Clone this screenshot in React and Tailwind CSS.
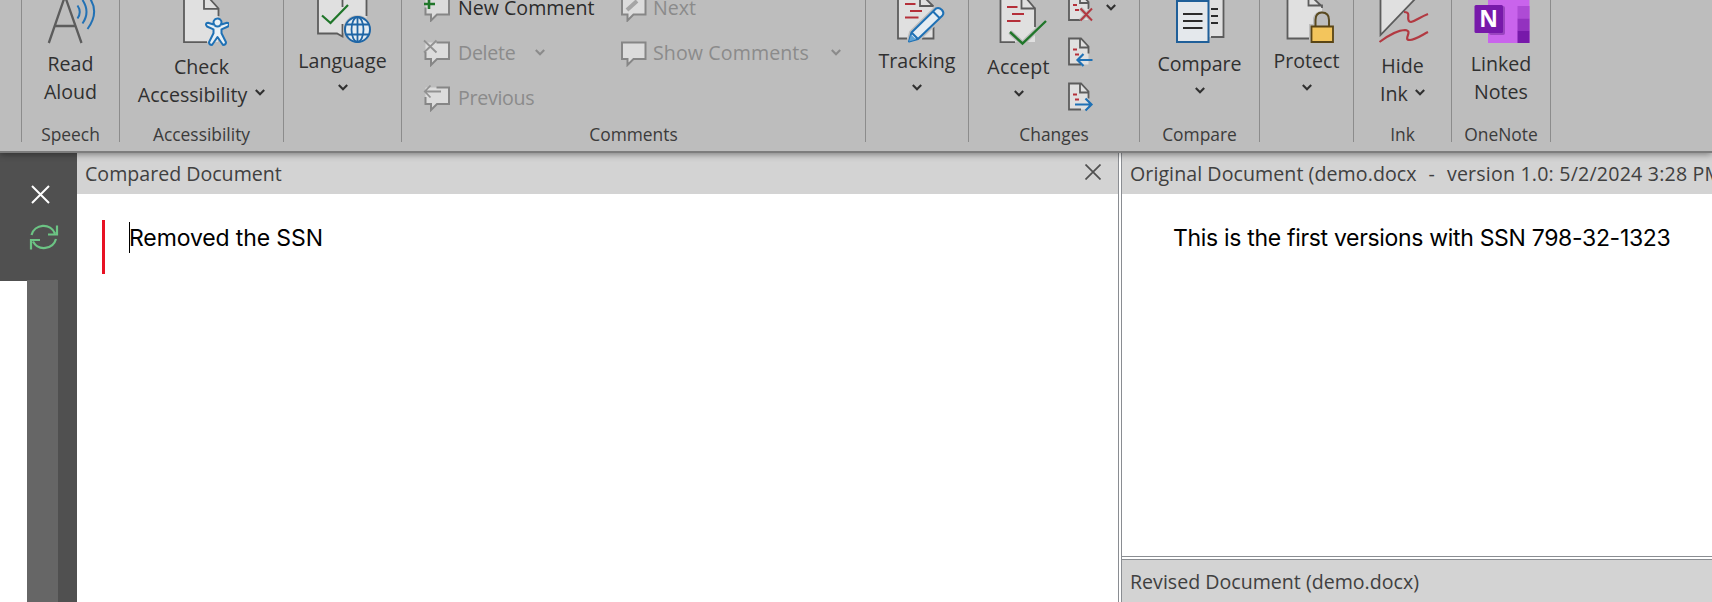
import React from 'react';

const Chevron = ({ className = '' }) => (
  <svg className={`shrink-0 ${className}`} width="10" height="7" viewBox="0 0 10 7" fill="none" stroke="currentColor" strokeWidth="2.1">
    <path d="M0.8 1 L5 5.2 L9.2 1" />
  </svg>
);

// Ribbon icons are drawn in ribbon coordinates, x is the left edge of the icon
const Icon = ({ x, y = 0, w, h, className = '', children }) => (
  <svg className={`shrink-0 ${className}`} width={w} height={h} viewBox={`${x} ${y} ${w} ${h}`} fill="none" stroke="#5c5c5c" strokeWidth="1.8">
    {children}
  </svg>
);

const Group = ({ className, label, children }) => (
  <div className={`flex shrink-0 ${className}`}>
    <div className="w-px h-[142px] bg-[#8c8c8c] shrink-0" />
    <div className="flex-1 min-w-0 h-[146px] flex flex-col">
      <div className="flex-1 min-h-0">{children}</div>
      <div className="h-6 leading-6 text-[17.4px] text-[#3b3b3b] text-center whitespace-nowrap">{label}</div>
    </div>
  </div>
);

const Bubble = ({ x, y, full }) => (
  <>
    <path d={`M${x} ${y} h23.5 v16.5 h-12 l-6 6 v-6 h-5.5 z`} fill="#dcdcdc" stroke="none" />
    <path
      d={full
        ? `M${x} ${y} h23.5 v16.5 h-12 l-6 6 v-6 h-5.5 z`
        : `M${x + 11} ${y} h12.5 v16.5 h-12 l-6 6 v-6 h-5.5 v-7`}
      stroke="#868686"
      strokeWidth="2"
    />
  </>
);

const SmallPage = ({ y }) => (
  <>
    <path d={`M1069 ${y} h12 l7.5 8 v18 h-19.5 z`} fill="#e0e0e0" stroke="none" />
    <path d={`M1081 ${y + 26} h-12 v-26 h12 l7.5 8 v7 M1080 ${y} v9 h8.5`} />
    <path d={`M1073 ${y + 11} h4 M1075 ${y + 16} h4`} stroke="#b5303a" />
  </>
);

const Ribbon = () => (
  <div className="relative z-10 h-[153px] w-full flex bg-[#bdbdbd] border-b-2 border-[#7d7d7d] shadow-[0_1px_7px_rgba(0,0,0,0.45)] overflow-hidden text-[19.6px] leading-7 text-[#303030]">
    <div className="w-[21px] shrink-0" />

    <Group className="w-[98px]" label="Speech">
      <div className="flex flex-col items-center text-center">
        <Icon x={45} w={51} h={49.5}>
          <path d="M48.8 43 L64 -1 H66 L81.5 43 M55 26 H75" strokeWidth="2.3" />
          <path d="M77.5 5.5 Q82 12 77.5 18.5 M82.5 0 Q90.5 12 82.5 23.5 M89 -3 Q100 12 87.5 29" stroke="#2271b4" strokeWidth="2" />
        </Icon>
        <span>Read<br />Aloud</span>
      </div>
    </Group>

    <Group className="w-[164px]" label="Accessibility">
      <div className="flex flex-col items-center">
        <Icon x={174} w={55} h={52.5}>
          <path d="M184 -2 H211 L218 8 V42 H184 z" fill="#e0e0e0" stroke="none" />
          <path d="M184 -2 V42.2 H207 M204 -2 V8.8 H218.5 V16 M210 -1 L218.5 8.5" />
          <path d="M217.5 18.5 a3.8 3.8 0 0 1 3 6.3 l6.5 -2 q2 0 2 2 l-1 1.7 l-6.5 2.8 v4 l4.5 9 q0 2.7 -3 2.7 l-5.5 -8 l-5.5 8 q-3 0 -3 -2.7 l4.5 -9 v-4 l-6.5 -2.8 l-1 -1.7 q0 -2 2 -2 l6.5 2 a3.8 3.8 0 0 1 3 -6.3 z" fill="#e8f0f5" stroke="#1f71b5" strokeWidth="2" strokeLinejoin="round" />
          <path d="M214.5 25.5 q3 2 6 0" stroke="#1f71b5" />
        </Icon>
        <span>Check</span>
        <span className="flex items-center gap-2 whitespace-nowrap">Accessibility<Chevron className="-mt-1" /></span>
      </div>
    </Group>

    <Group className="w-[118px]" label="">
      <div className="flex flex-col items-center">
        <Icon x={312} w={61} h={46.5}>
          <path d="M318 -2 H366.5 V33 H342 V36 L337 33.5 H318 z" fill="#e0e0e0" stroke="none" />
          <path d="M318 -2 V33.5 H337 L342.5 36.5 V24 M342.5 -2 V7 M366.5 -2 V16" />
          <path d="M322 15.5 L330.5 23 L348 5" stroke="#20762a" strokeWidth="2.2" />
          <circle cx="357.5" cy="29.5" r="14.3" fill="#bdbdbd" stroke="none" />
          <circle cx="357.5" cy="29.5" r="12.5" fill="#e4ecf2" stroke="#1f66a6" strokeWidth="2" />
          <path d="M357.5 17 V42 M346.5 24.5 H368.5 M346.5 34.5 H368.5" stroke="#1f66a6" />
          <ellipse cx="357.5" cy="29.5" rx="6" ry="12.5" stroke="#1f66a6" />
        </Icon>
        <span>Language</span>
        <Chevron className="mt-[9px]" />
      </div>
    </Group>

    <Group className="w-[464px]" label="Comments">
      <div className="flex -mt-[15px] pl-[21px] text-[#8b8b8b] whitespace-nowrap">
        <div className="w-[197px]">
          <div className="h-[45px] flex items-center gap-2 text-[#2b2b2b]">
            <Icon x={423} y={-9} w={27} h={28}>
              <Bubble x={425.5} y={-5} />
              <path d="M429 -5 V6 M424 1 H435" stroke="#20762a" strokeWidth="2.6" />
            </Icon>
            New Comment
          </div>
          <div className="h-[45px] flex items-center gap-2">
            <Icon x={423} y={37} w={27} h={28}>
              <Bubble x={425.5} y={40.5} />
              <path d="M424 38.5 L436.5 50.5 M436.5 38.5 L424 50.5" stroke="#929292" />
            </Icon>
            <span className="tracking-[-0.3px]">Delete</span>
            <Chevron className="ml-3" />
          </div>
          <div className="h-[45px] flex items-center gap-2">
            <Icon x={423} y={82} w={27} h={28}>
              <Bubble x={425.5} y={85.5} />
              <path d="M441 89.5 H425 M430.5 83.5 L424.8 89.5 L430.5 95.5" stroke="#929292" />
            </Icon>
            <span className="tracking-[-0.3px]">Previous</span>
          </div>
        </div>
        <div>
          <div className="h-[45px] flex items-center gap-[6px]">
            <Icon x={620} y={-9} w={27} h={28}>
              <Bubble x={622} y={-5} full />
              <path d="M627 7 L637 -2" stroke="#a5a5a5" strokeWidth="4" />
            </Icon>
            Next
          </div>
          <div className="h-[45px] flex items-center gap-[6px]">
            <Icon x={620} y={37} w={27} h={28}>
              <Bubble x={622} y={40.5} full />
            </Icon>
            <span className="tracking-[0.1px]">Show Comments</span>
            <Chevron className="ml-4" />
          </div>
        </div>
      </div>
    </Group>

    <Group className="w-[103px]" label="">
      <div className="flex flex-col items-center">
        <Icon x={887} w={60} h={46.5}>
          <path d="M898 -2 H926 L933.5 6 V38.5 H898 z" fill="#e0e0e0" stroke="none" />
          <path d="M907 38.5 H898 V-2 M920 -2 V6 H933.5 M925 -2 L933.5 6.5 M933.5 27 V38.5 H922" />
          <path d="M905 4 H915.5 M910 11 H922 M905 17.5 H918.5" stroke="#b5303a" />
          <path d="M909 41.5 L911.5 32.5 L936 8.5 q3 -1.5 6 1.5 q2.5 3 0.5 5.5 L918 39 z" stroke="#bdbdbd" strokeWidth="5" />
          <path d="M909 41.5 L911.5 32.5 L936 8.5 q3 -1.5 6 1.5 q2.5 3 0.5 5.5 L918 39 z M911.5 32.5 L918 39 M933 11.5 L939.5 18" fill="#e4ecf2" stroke="#1f71b5" strokeWidth="2" strokeLinejoin="round" />
          <path d="M909 41.5 L911 34.5 L916 39.5 z" fill="#5fa3d5" stroke="none" />
        </Icon>
        <span>Tracking</span>
        <Chevron className="mt-[9px]" />
      </div>
    </Group>

    <Group className="w-[171px]" label="Changes">
      <div className="flex">
        <div className="w-[99px] flex flex-col items-center">
          <Icon x={990} w={57} h={52.5}>
            <path d="M1000 -2 H1026 L1035 8 V42 H1000 z" fill="#e0e0e0" stroke="none" />
            <path d="M1015 42.2 H1000.5 V-2 M1021.5 -2 V8.5 H1035 V27 M1026 -2 L1035 8.5" />
            <path d="M1007 7 H1017.5 M1012 14 H1024 M1007 21 H1020.5" stroke="#b5303a" />
            <path d="M1010 32 L1022.5 43.5 L1046 21" stroke="#bdbdbd" strokeWidth="5" />
            <path d="M1010 32 L1022.5 43.5 L1046 21" stroke="#20762a" strokeWidth="2.4" />
          </Icon>
          <span className="tracking-[0.2px]">Accept</span>
          <Chevron className="mt-[9px]" />
        </div>
        <Icon x={1068} w={26} h={115}>
          <SmallPage y={-6} />
          <SmallPage y={38.5} />
          <SmallPage y={83.5} />
          <path d="M1080.5 8.5 L1092 20.5 M1092 8.5 L1080.5 20.5" stroke="#bdbdbd" strokeWidth="4" />
          <path d="M1080.5 8.5 L1092 20.5 M1092 8.5 L1080.5 20.5" stroke="#b23a42" strokeWidth="2" />
          <path d="M1092.5 60 H1078 M1083.5 54 L1077.5 60 L1083.5 66" stroke="#1f71b5" strokeWidth="2.2" />
          <path d="M1075 104.5 H1091 M1085.5 98.5 L1091.5 104.5 L1085.5 110.5" stroke="#1f71b5" strokeWidth="2.2" />
        </Icon>
        <Chevron className="mt-1 ml-3" />
      </div>
    </Group>

    <Group className="w-[120px]" label="Compare">
      <div className="flex flex-col items-center">
        <Icon x={1173} w={53} h={49.5}>
          <path d="M1208 -2 H1223.5 V37 H1208 z" fill="#e0e0e0" stroke="none" />
          <path d="M1223.5 -2 V37 H1211" />
          <path d="M1211 9 H1218 M1211 16 H1218 M1211 23 H1218" stroke="#2b2b2b" />
          <path d="M1177 1 H1208.5 V42 H1177 z" fill="#e4e8ec" stroke="#1f5f99" strokeWidth="2" />
          <path d="M1183 14 H1202.5 M1183 21 H1202.5 M1183 28 H1202.5" stroke="#2b2b2b" />
        </Icon>
        <span>Compare</span>
        <Chevron className="mt-[9px]" />
      </div>
    </Group>

    <Group className="w-[94px]" label="">
      <div className="flex flex-col items-center">
        <Icon x={1276} w={61} h={46.5}>
          <path d="M1287.5 -2 H1314 L1322 6 V38.5 H1287.5 z" fill="#e0e0e0" stroke="none" />
          <path d="M1309 38.5 H1287.5 V-2 M1308.5 -2 V5.5 H1322 V8 M1313 -2 L1322 6.5" />
          <path d="M1309 24 H1313 V18 Q1315 11 1322 11 Q1330 11 1331 18 V24 H1335 V44 H1309 z" fill="#bdbdbd" stroke="none" />
          <path d="M1315.5 26 V20 q0 -7.5 6.5 -7.5 q7 0 7 7.5 V26" stroke="#5a4a20" strokeWidth="2" />
          <path d="M1311.5 26.5 H1333 V42 H1311.5 z" fill="#f3c55c" stroke="#5a4515" strokeWidth="1.8" />
        </Icon>
        <span>Protect</span>
        <Chevron className="mt-[9px]" />
      </div>
    </Group>

    <Group className="w-[98px]" label="Ink">
      <div className="flex flex-col items-center">
        <Icon x={1376} w={53} h={52}>
          <path d="M1380.5 -3 V35 L1417 -3 z" fill="#e0e0e0" />
          <path d="M1379.5 42 C1390 34 1400 30 1405 30 C1414 31 1402 40 1410 40 C1415 40 1422 35 1428 32 M1404 12 C1413 12 1404 21 1411 22 C1416 21 1420 17 1428 14" stroke="#b23a42" strokeWidth="2.2" />
        </Icon>
        <span>Hide</span>
        <span className="flex items-center gap-[7px]">Ink<Chevron className="-mt-1" /></span>
      </div>
    </Group>

    <Group className="w-[99px]" label="OneNote">
      <div className="flex flex-col items-center text-center">
        <Icon x={1471} w={60} h={49.5}>
          <g stroke="none">
            <path d="M1488 -2 H1529.5 V43 H1488 z" fill="#c964ec" />
            <path d="M1517.5 6 H1529.5 V18.5 H1517.5 z" fill="#ae4bd5" />
            <path d="M1517.5 18.5 H1529.5 V30.5 H1517.5 z" fill="#9332bf" />
            <path d="M1517.5 30.5 H1529.5 V43 H1517.5 z" fill="#7719aa" />
            <rect x="1489" y="6" width="16" height="29" rx="2" fill="#9a45c0" />
            <rect x="1474.5" y="5" width="28.5" height="28" rx="1.5" fill="#7719aa" />
            <text x="1488.5" y="27" textAnchor="middle" fill="#fff" fontSize="23" fontWeight="700">N</text>
          </g>
        </Icon>
        <span>Linked<br />Notes</span>
      </div>
    </Group>
    <div className="w-px h-[142px] bg-[#8c8c8c]" />
  </div>
);

const SidePane = () => (
  <div className="w-[77px] shrink-0 bg-[#505050] flex flex-col">
    <div className="h-[127px] shrink-0 pt-8 flex flex-col">
      <svg className="ml-[30.5px]" width="19" height="19" viewBox="0 0 19 19" stroke="#fff" strokeWidth="2">
        <path d="M1 1 L18 18 M18 1 L1 18" />
      </svg>
      <svg className="ml-[28.5px] mt-[18px]" width="30" height="30" viewBox="0 0 30 30" fill="none" stroke="#6cc484" strokeWidth="2.2">
        <path d="M2.5 13 A12.5 12.5 0 0 1 26 11.5 M28 3.5 V12.5 H19 M27 17 A12.5 12.5 0 0 1 4 19.5 M2 27.5 V18 H11" />
      </svg>
    </div>
    <div className="flex-1 flex">
      <div className="w-[26.5px] bg-white mt-px" />
      <div className="w-[31px] bg-[#666666]" />
    </div>
  </div>
);

const PaneTitle = ({ className = '', children }) => (
  <div className={`h-[41px] shrink-0 bg-[#d3d3d3] text-[19.6px] text-[#404040] leading-[42px] whitespace-nowrap flex justify-between ${className}`}>
    {children}
  </div>
);

const App = () => (
  <div className="w-[1712px] h-[602px] overflow-hidden flex flex-col bg-white font-['Open_Sans',sans-serif]">
    <Ribbon />
    <div className="flex-1 min-h-0 flex">
      <SidePane />
      <div className="w-[1041px] shrink-0">
        <PaneTitle className="pl-2 pr-[17px]">
          <span>Compared Document</span>
          <svg className="mt-[11px]" width="16" height="16" viewBox="0 0 16 16" stroke="#505050" strokeWidth="1.7">
            <path d="M0.5 0.5 L15.5 15.5 M15.5 0.5 L0.5 15.5" />
          </svg>
        </PaneTitle>
        <div className="flex pt-[26px] pl-[25px]">
          <div className="w-[2.5px] h-[54px] bg-[#e81123]" />
          <div className="ml-[24.5px] mt-[2px] w-px h-[31px] bg-black" />
          <div className="-ml-px mt-[1.5px] font-['Inter',sans-serif] text-[23px] leading-8 text-black tracking-[-0.12px]">Removed the SSN</div>
        </div>
      </div>
      <div className="w-[4px] shrink-0 border-x border-[#8a8d92] bg-white" />
      <div className="flex-1 min-w-0 flex flex-col">
        <PaneTitle className="pl-2">
          <div className="flex">
            <span className="tracking-[0.07px]">Original Document (demo.docx</span>
            <span className="mx-3">-</span>
            <span className="tracking-[0.2px]">version 1.0: 5/2/2024 3:28 PM</span>
          </div>
        </PaneTitle>
        <div className="h-[362px] shrink-0 pt-[27.5px] pl-[51px] font-['Inter',sans-serif] text-[23px] leading-8 text-black tracking-[-0.32px] whitespace-nowrap">
          This is the first versions with SSN 798-32-1323
        </div>
        <div className="h-[4px] shrink-0 border-y border-[#8a8d92] bg-white" />
        <PaneTitle className="flex-1 pl-2 pt-px">
          <span>Revised Document (demo.docx)</span>
        </PaneTitle>
      </div>
    </div>
  </div>
);

export default App;
